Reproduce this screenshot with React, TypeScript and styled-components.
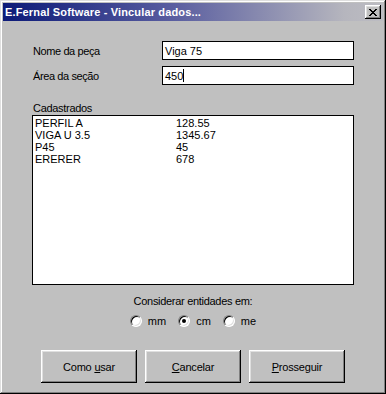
import styled, { createGlobalStyle } from "styled-components";

const GlobalStyle = createGlobalStyle`
  html, body {
    margin: 0;
    padding: 0;
    background: #c0c0c0;
  }
  body {
    font-family: "Liberation Sans", Arial, sans-serif;
    font-size: 11px;
    color: #000;
  }
`;

const items = [
  { name: "PERFIL A", area: "128.55" },
  { name: "VIGA U 3.5", area: "1345.67" },
  { name: "P45", area: "45" },
  { name: "ERERER", area: "678" },
];

const units = [
  { id: "mm", checked: false },
  { id: "cm", checked: true },
  { id: "me", checked: false },
];

const App = () => {
  return (
    <>
      <GlobalStyle />
      <Window>
        <TitleBar>
          <Title>E.Fernal Software - Vincular dados...</Title>
          <CloseButton>
            <svg width="8" height="7" viewBox="0 0 8 7" shapeRendering="crispEdges">
              <path
                d="M0 0h2v1h1v1h2v-1h1v-1h2v1h-1v1h-1v1h-1v1h1v1h1v1h1v1h-2v-1h-1v-1h-2v1h-1v1h-2v-1h1v-1h1v-1h1v-1h-1v-1h-1v-1h-1z"
                fill="#000"
              />
            </svg>
          </CloseButton>
        </TitleBar>

        <Body>
          <FieldRow>
            <FieldLabel>Nome da peça</FieldLabel>
            <TextBox>Viga 75</TextBox>
          </FieldRow>
          <FieldRow $gap={6}>
            <FieldLabel>Área da seção</FieldLabel>
            <TextBox>
              450
              <Caret />
            </TextBox>
          </FieldRow>

          <ListLabel>Cadastrados</ListLabel>
          <ListBox>
            {items.map((item) => (
              <ListRow key={item.name}>
                <span>{item.name}</span>
                <span>{item.area}</span>
              </ListRow>
            ))}
          </ListBox>

          <UnitsLabel>Considerar entidades em:</UnitsLabel>
          <RadioGroup>
            {units.map((unit) => (
              <RadioItem key={unit.id}>
                <RadioCircle>{unit.checked && <RadioDot />}</RadioCircle>
                <span>{unit.id}</span>
              </RadioItem>
            ))}
          </RadioGroup>

          <ButtonRow>
            <PushButton>
              Como <Accel>u</Accel>sar
            </PushButton>
            <PushButton>
              <Accel>C</Accel>ancelar
            </PushButton>
            <PushButton>
              <Accel>P</Accel>rosseguir
            </PushButton>
          </ButtonRow>
        </Body>
      </Window>
    </>
  );
};

export default App;

const Window = styled.div`
  width: 386px;
  height: 394px;
  box-sizing: border-box;
  padding: 3px;
  display: flex;
  flex-direction: column;
  background: #c0c0c0;
  box-shadow: inset -1px -1px #000, inset 1px 1px #dfdfdf, inset -2px -2px #808080,
    inset 2px 2px #fff;
`;

const TitleBar = styled.div`
  height: 18px;
  display: flex;
  align-items: center;
  justify-content: space-between;
  padding: 0 2px 0 2px;
  background: linear-gradient(90deg, #0c1a78 0%, #5a5ea0 45%, #b6b6be 90%, #bcbcc2 100%);
`;

const Title = styled.span`
  color: #fff;
  font-weight: bold;
  font-size: 11px;
  letter-spacing: 0.15px;
  line-height: 18px;
  white-space: nowrap;
`;

const CloseButton = styled.div`
  width: 16px;
  height: 14px;
  display: flex;
  align-items: center;
  justify-content: center;
  background: #c0c0c0;
  box-shadow: inset -1px -1px #000, inset 1px 1px #fff, inset -2px -2px #808080,
    inset 2px 2px #dfdfdf;
`;

const Body = styled.div`
  flex: 1;
  display: flex;
  flex-direction: column;
  padding: 0 29px;
`;

const FieldRow = styled.div<{ $gap?: number }>`
  display: flex;
  align-items: center;
  height: 19px;
  margin-top: ${({ $gap }) => $gap ?? 20}px;
`;

const FieldLabel = styled.span`
  width: 130px;
  padding-left: 1px;
  box-sizing: border-box;
  white-space: nowrap;
  letter-spacing: -0.4px;
`;

const TextBox = styled.div`
  flex: 1;
  height: 19px;
  box-sizing: border-box;
  border: 1px solid #000;
  background: #fff;
  padding: 0 2px;
  display: flex;
  align-items: center;
`;

const Caret = styled.span`
  display: inline-block;
  width: 1px;
  height: 13px;
  background: #000;
`;

const ListLabel = styled.div`
  margin-top: 17px;
  height: 13px;
  line-height: 13px;
  padding-left: 1px;
  letter-spacing: -0.3px;
`;

const ListBox = styled.div`
  height: 170px;
  box-sizing: border-box;
  border: 1px solid #000;
  background: #fff;
  padding: 1px 2px;
`;

const ListRow = styled.div`
  display: grid;
  grid-template-columns: 141px 1fr;
  height: 12px;
  line-height: 12px;
  white-space: nowrap;
`;

const UnitsLabel = styled.div`
  margin-top: 10px;
  line-height: 13px;
  text-align: center;
  letter-spacing: -0.3px;
`;

const RadioGroup = styled.div`
  display: flex;
  justify-content: center;
  gap: 12px;
  margin-top: 7px;
  height: 12px;
`;

const RadioItem = styled.div`
  display: flex;
  align-items: center;
  gap: 6px;
  line-height: 12px;
`;

const RadioCircle = styled.span`
  width: 12px;
  height: 12px;
  box-sizing: border-box;
  border-radius: 50%;
  background: #fff;
  border: 1px solid;
  border-color: #808080 #fff #fff #808080;
  box-shadow: inset 1px 1px #000, inset -1px -1px #dfdfdf;
  display: flex;
  align-items: center;
  justify-content: center;
`;

const RadioDot = styled.span`
  width: 4px;
  height: 4px;
  border-radius: 50%;
  background: #000;
`;

const ButtonRow = styled.div`
  display: flex;
  justify-content: center;
  gap: 8px;
  margin-top: 23px;
`;

const PushButton = styled.button`
  width: 96px;
  height: 33px;
  padding: 0;
  border: none;
  background: #c0c0c0;
  font-family: "Liberation Sans", Arial, sans-serif;
  font-size: 11px;
  letter-spacing: -0.2px;
  color: #000;
  box-shadow: inset -1px -1px #000, inset 1px 1px #fff, inset -2px -2px #808080,
    inset 2px 2px #dfdfdf;
`;

const Accel = styled.span`
  text-decoration: underline;
`;
